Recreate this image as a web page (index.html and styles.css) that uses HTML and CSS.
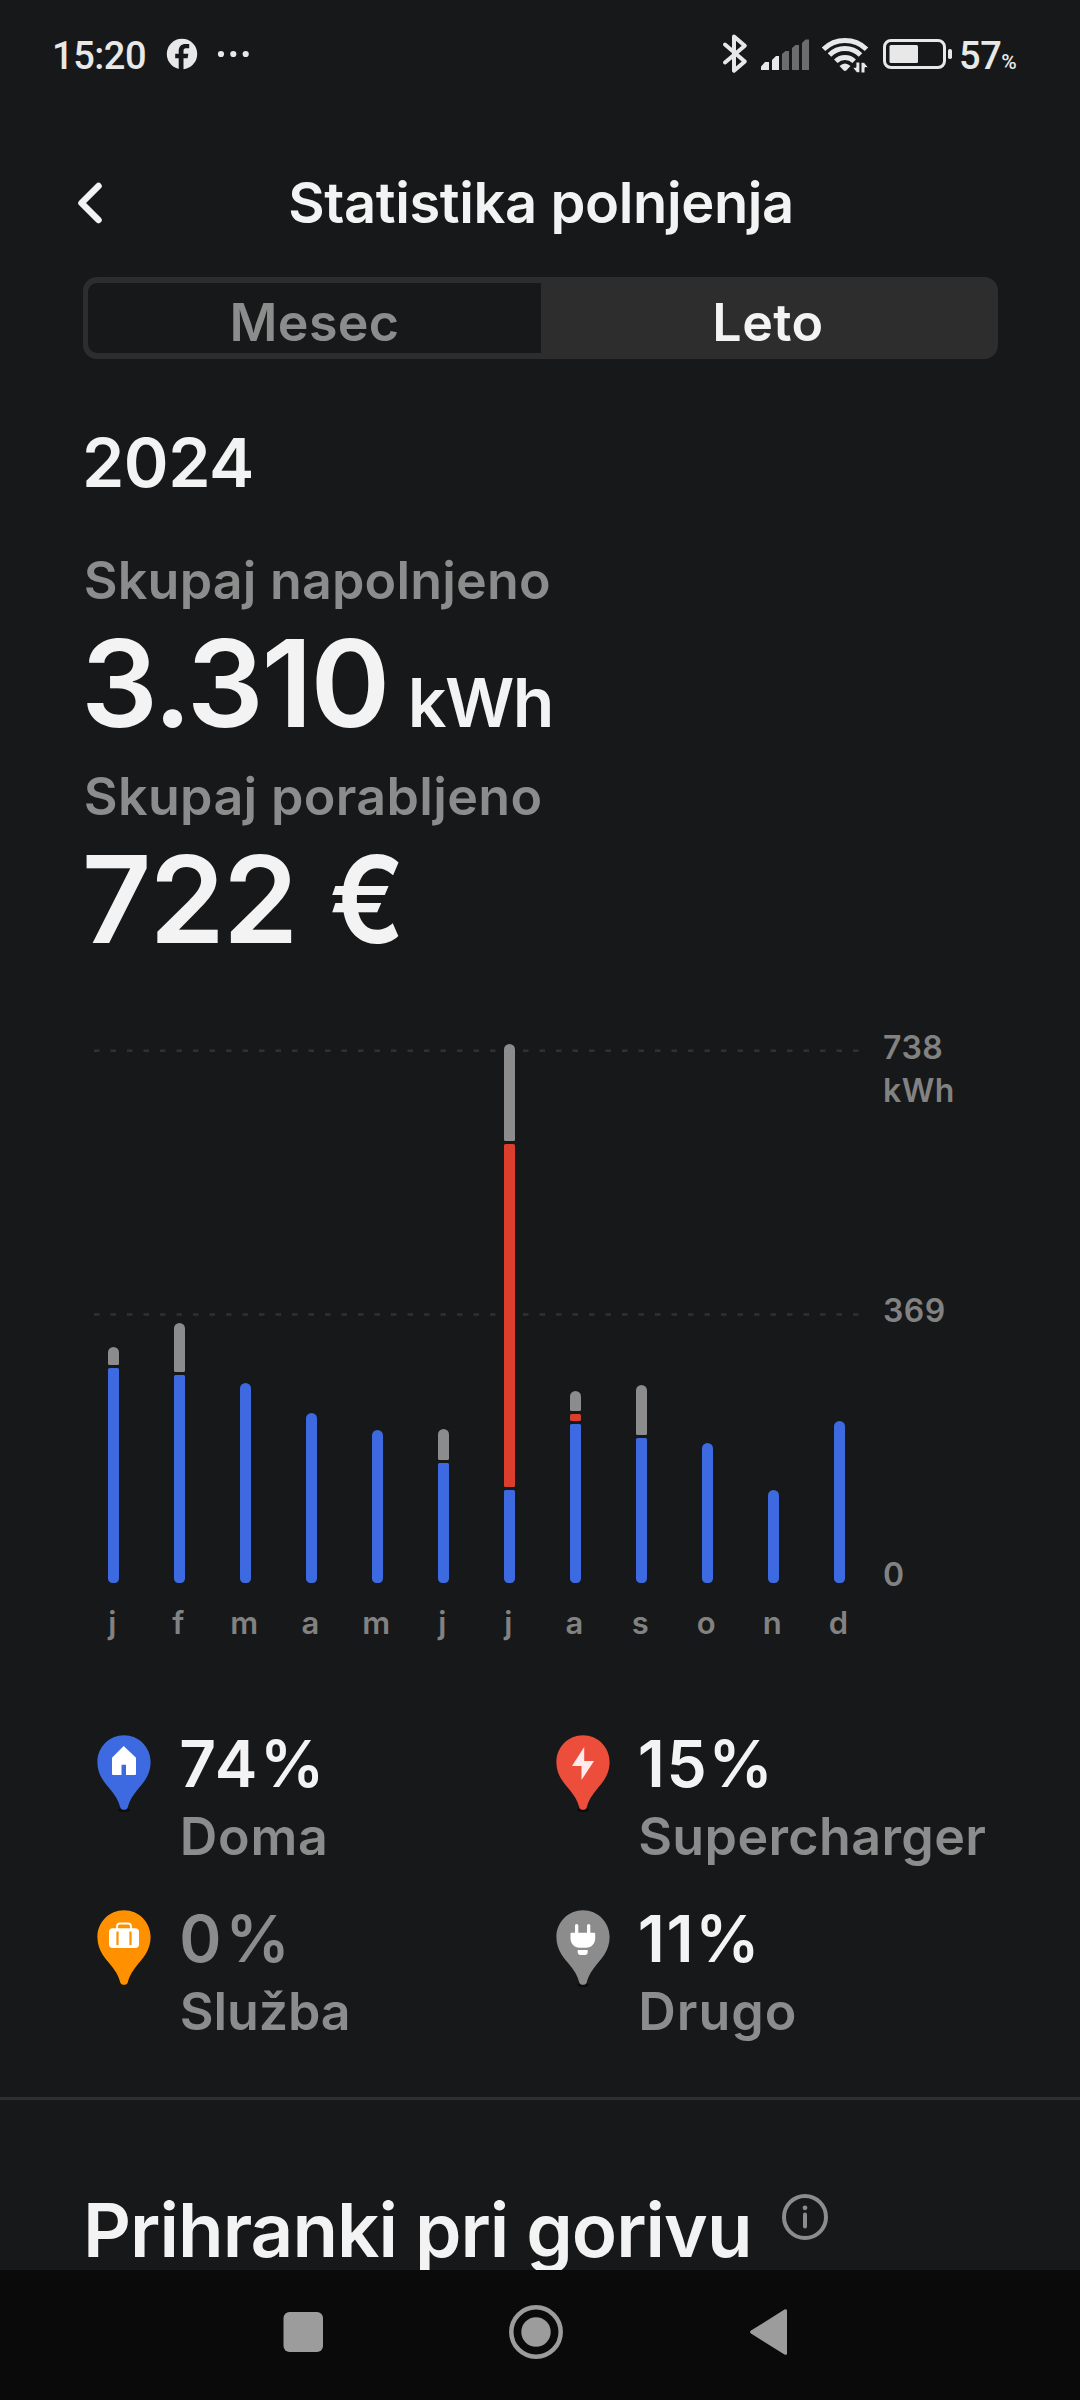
FILE: index.html
```html
<!DOCTYPE html>
<html lang="sl">
<head>
<meta charset="utf-8">
<title>Statistika polnjenja</title>
<link rel="stylesheet" href="styles.css">
</head>
<body>
<div class="screen">
  <div class="status">
    <span class="time">15:20</span>
    <svg class="notif" width="84" height="32" viewBox="166 38 84 32">
      <circle cx="182" cy="54" r="15.2" fill="#e8e8e8"/>
      <path fill="#171819" d="M178.7 70V58.3h-3.5v-4.5h3.5V51c0-4.8 2.8-7 6.8-7h3.7v4.3H186c-2 0-2.5 1-2.5 2.7v2.8h4.9l-.8 4.5h-4.1V70z"/>
      <g fill="#e8e8e8"><circle cx="221" cy="54" r="3.1"/><circle cx="233.3" cy="54" r="3.1"/><circle cx="245.7" cy="54" r="3.1"/></g>
    </svg>
    <svg class="indicators" width="234" height="42" viewBox="720 33 234 42">
      <path fill="none" stroke="#e8e8e8" stroke-width="4" stroke-linecap="round" stroke-linejoin="round" d="M725 44.5l19.8 17L734 70.8V36.5l10.8 9.3L725 62.5"/>
      <g fill="#e8e8e8"><path d="M761 70v-3.5l4-4.5h4v8z"/><path d="M772 70V60l4-4h3v14z"/></g>
      <g fill="#6c6d6e"><path d="M782 70V54l3.5-3h3.5v19z"/><path d="M792 70V48l3.5-3h3.5v25z"/><path d="M802 70V43l3.5-3.5h3.5V70z"/></g>
      <g fill="none" stroke="#e8e8e8" stroke-width="5"><path d="M823.5 49.2a31 31 0 0 1 43 0"/><path d="M829.5 55a22 22 0 0 1 31 0"/><path d="M835.8 61.2a13.2 13.2 0 0 1 18.4 0"/></g>
      <path fill="#e8e8e8" d="M839.5 66q5.500-5 11 0l-4 4.200q-1.500 1.400-3 0z"/>
      <g fill="#e8e8e8" stroke="#171819" stroke-width="1"><path d="M859.9 62v10.800h-3L852.300 67.300h3.600V62z"/><path d="M861 73V62.200h3l4.600 5.500h-3.600V73z"/></g>
      <rect x="884.5" y="40.500" width="60" height="27" rx="6.500" fill="none" stroke="#e8e8e8" stroke-width="3"/>
      <rect x="889.5" y="45" width="28.500" height="18" rx="1.500" fill="#e8e8e8"/>
      <rect x="948" y="49" width="4" height="10" rx="1.800" fill="#e8e8e8"/>
    </svg>
    <span class="battery">57<small>%</small></span>
  </div>

  <header class="header">
    <svg class="back" width="30" height="46" viewBox="75 179.500 30 46"><path fill="none" stroke="#f3f3f3" stroke-width="6.500" stroke-linecap="round" stroke-linejoin="round" d="M98.500 185.500L81.500 202.500l17 17"/></svg>
    <h1>Statistika polnjenja</h1>
  </header>

  <div class="tabs"><div class="tab">Mesec</div><div class="tab tab-on">Leto</div></div>

  <main>
    <div class="year">2024</div>
    <div class="label first">Skupaj napolnjeno</div>
    <div class="value energy">3.310<span class="unit">kWh</span></div>
    <div class="label second">Skupaj porabljeno</div>
    <div class="value cost">722 <span class="euro">€</span></div>

    <div class="chart">
      <div class="plot-col">
        <div class="plot">
          <svg class="grid" width="770" height="280" viewBox="0 0 770 280"><path stroke="#303132" stroke-width="2.500" stroke-dasharray="5.500 11" d="M0 5.700H766M0 269.400H766"/></svg>
          <div class="bar"><i class="other" style="height:18px"></i><i class="home" style="height:215.500px"></i></div>
          <div class="bar"><i class="other" style="height:49.400px"></i><i class="home" style="height:208.200px"></i></div>
          <div class="bar"><i class="home" style="height:200.400px"></i></div>
          <div class="bar"><i class="home" style="height:170.200px"></i></div>
          <div class="bar"><i class="home" style="height:153.900px"></i></div>
          <div class="bar"><i class="other" style="height:31px"></i><i class="home" style="height:120px"></i></div>
          <div class="bar"><i class="other" style="height:96.300px"></i><i class="super" style="height:343.200px"></i><i class="home" style="height:93.500px"></i></div>
          <div class="bar"><i class="other" style="height:20px"></i><i class="super" style="height:6.500px"></i><i class="home" style="height:159.600px"></i></div>
          <div class="bar"><i class="other" style="height:49.400px"></i><i class="home" style="height:145.700px"></i></div>
          <div class="bar"><i class="home" style="height:140px"></i></div>
          <div class="bar"><i class="home" style="height:93.500px"></i></div>
          <div class="bar"><i class="home" style="height:162.100px"></i></div>
        </div>
        <div class="months"><span>j</span><span>f</span><span>m</span><span>a</span><span>m</span><span>j</span><span>j</span><span>a</span><span>s</span><span>o</span><span>n</span><span>d</span></div>
      </div>
      <div class="axis"><div>738<br>kWh</div><div class="mid">369</div><div class="zero">0</div></div>
    </div>

    <div class="legend">
      <div class="item">
        <svg class="pin" width="54" height="78" viewBox="0 0 54 78"><ellipse cx="27" cy="75" rx="6" ry="2" fill="#0c0c0d"/><path fill="#3e6ae1" d="M27 .3C12.300.3.4 12.200.4 27 .4 41 9 49 14.500 56c5 6.500 7 10 8.800 16.500.7 3.100 6.700 3.100 7.400 0C32.500 66 34.500 62.500 39.500 56 45 49 53.600 41 53.600 27 53.600 12.200 41.700.3 27 .3z"/><path fill="#fff" d="M26.700 11L39 22.700V39q0 1-1 1h-9V29.700h-4.500V40H16q-1 0-1-1V22.700z"/></svg>
        <div><div class="pct p1">74%</div><div class="name n1">Doma</div></div>
      </div>
      <div class="item">
        <svg class="pin" width="54" height="78" viewBox="0 0 54 78"><ellipse cx="27" cy="75" rx="6" ry="2" fill="#0c0c0d"/><path fill="#ed4e3b" d="M27 .3C12.300.3.4 12.200.4 27 .4 41 9 49 14.500 56c5 6.500 7 10 8.800 16.500.7 3.100 6.700 3.100 7.400 0C32.500 66 34.500 62.500 39.500 56 45 49 53.600 41 53.600 27 53.600 12.200 41.700.3 27 .3z"/><path fill="#ffecea" d="M28.200 12L16 31h9.500v14L38 26h-9.800z"/></svg>
        <div><div class="pct p2">15%</div><div class="name n2">Supercharger</div></div>
      </div>
      <div class="item">
        <svg class="pin" width="54" height="78" viewBox="0 0 54 78"><path fill="#ff9100" d="M27 .3C12.300.3.4 12.200.4 27 .4 41 9 49 14.500 56c5 6.500 7 10 8.800 16.500.7 3.100 6.700 3.100 7.400 0C32.500 66 34.500 62.500 39.500 56 45 49 53.600 41 53.600 27 53.600 12.200 41.700.3 27 .3z"/><rect x="12" y="18.300" width="30" height="19.700" rx="3.800" fill="#fff"/><path fill="none" stroke="#fff" stroke-width="1.800" d="M20 19v-2.500q0-3 3-3h8q3 0 3 3V19"/><path stroke="#ff9100" stroke-width="2.200" d="M20.500 21.500v13.500M33.500 21.500v13.500"/></svg>
        <div><div class="pct p3">0%</div><div class="name n3">Služba</div></div>
      </div>
      <div class="item">
        <svg class="pin" width="54" height="78" viewBox="0 0 54 78"><ellipse cx="27" cy="75" rx="6" ry="2" fill="#0c0c0d"/><path fill="#8b8c8b" d="M27 .3C12.300.3.4 12.200.4 27 .4 41 9 49 14.500 56c5 6.500 7 10 8.800 16.500.7 3.100 6.700 3.100 7.400 0C32.500 66 34.500 62.500 39.500 56 45 49 53.600 41 53.600 27 53.600 12.200 41.700.3 27 .3z"/><g fill="#fff"><rect x="19" y="14" width="3.300" height="11" rx="1.600"/><rect x="31" y="14" width="3.300" height="11" rx="1.600"/><path d="M15.500 22.700h22.700q1 0 1 1V28c0 6-4 9.700-9 9.700h-6.700c-5 0-9-3.700-9-9.700v-4.300q0-1 1-1z"/><path d="M21.700 40h10v2q0 3-3 3h-4q-3 0-3-3z"/></g></svg>
        <div><div class="pct p4">11%</div><div class="name n4">Drugo</div></div>
      </div>
    </div>
  </main>

  <section class="savings">
    <h2>Prihranki pri gorivu</h2>
    <svg class="info" width="48" height="48" viewBox="0 0 48 48"><circle cx="24" cy="24" r="21" fill="none" stroke="#8b8c8b" stroke-width="4"/><circle cx="24" cy="14.800" r="2.400" fill="#8b8c8b"/><path stroke="#8b8c8b" stroke-width="4" stroke-linecap="round" d="M24 21.500v12"/></svg>
  </section>

  <nav class="navbar">
    <svg width="1080" height="130" viewBox="0 2270 1080 130"><g fill="#9c9c9c"><rect x="283.500" y="2312" width="39.500" height="40" rx="6"/><circle cx="536" cy="2332" r="14.700"/><path d="M751 2330.600L784.500 2309.600q2.500-1.300 2.500 1.200v42.400q0 2.500-2.500 1.200L751 2333.600q-2-1.500 0-3z"/></g><circle cx="536" cy="2332" r="24.700" fill="none" stroke="#9c9c9c" stroke-width="4.500"/></svg>
  </nav>
</div>
</body>
</html>
```
FILE: styles.css
```css
* { box-sizing: border-box; }
body { margin: 0; background: #171819; }
svg { display: block; flex: none; }
.screen {
  width: 1080px; height: 2400px; overflow: hidden;
  display: flex; flex-direction: column;
  background: #171819; color: #f3f3f3;
  font-family: Inter, "Liberation Sans", sans-serif; font-weight: 600;
}
.status {
  flex: none; height: 108px; padding-left: 52px;
  display: flex; align-items: center;
  font-family: Roboto, sans-serif; font-weight: 500; color: #e8e8e8;
}
.time, .battery { font-size: 38px; line-height: 44px; letter-spacing: -0.45px; padding-top: 4.6px; white-space: nowrap; }
.time { width: 114px; }
.indicators { margin-left: 470px; }
.battery { margin-left: 5px; height: 48.6px; }
.battery small { font-size: 21px; line-height: 1; margin-left: 0; }
.header { flex: none; height: 149px; margin-top: 20px; padding-left: 75px; display: flex; align-items: center; }
h1 { margin: 1px 0 0 183.3px; font-size: 56px; line-height: 60px; font-weight: 600; letter-spacing: -0.38px; }
.tabs {
  flex: none; height: 82px; margin: 0 82.5px 0 83px; padding-left: 5px;
  display: flex; border-radius: 14px; background: #2d2d2d;
}
.tab {
  flex: none; width: 453px; height: 70px; margin-top: 6px; border-radius: 9px 0 0 9px; background: #171819;
  text-align: center; font-size: 52px; line-height: 79px; letter-spacing: 0.3px; color: #8b8c8b;
}
.tab-on { flex: 1; padding-right: 2.5px; background: none; color: #f3f3f3; letter-spacing: 0.4px; }
main { flex: none; padding-left: 83px; }
.year { margin: 62.500px 0 0 -1px; font-size: 68px; line-height: 80px; letter-spacing: -0.500px; }
.label { margin-left: 0.8px; font-size: 52px; line-height: 60px; color: #8b8c8b; white-space: nowrap; }
.first { margin-top: 49.500px; letter-spacing: 0.190px; }
.second { margin-top: 23px; letter-spacing: 0.340px; }
.value { margin: 12px 0 0 -2px; height: 121px; font-size: 121px; line-height: 120px; letter-spacing: -2.160px; white-space: nowrap; }
.cost { margin-left: -1.200px; letter-spacing: -1.950px; }
.euro { display: inline-block; transform: scaleX(0.92); transform-origin: 97% 50%; margin-left: -2px; }
.unit { margin-left: 19.500px; font-size: 68px; line-height: 68px; letter-spacing: -1.500px; }
.chart { display: flex; margin-top: 65.600px; height: 616.200px; margin-left: -3px; color: #828282; font-size: 32px; }
.plot-col { width: 803px; padding-top: 19px; }
.plot { position: relative; width: 792px; height: 538.800px; display: flex; }
.grid { position: absolute; left: 14px; top: 0; }
.bar { position: relative; width: 66px; height: 100%; display: flex; flex-direction: column; justify-content: flex-end; align-items: center; gap: 3px; }
.bar i { width: 11px; flex: none; border-radius: 1.500px; }
.bar i:first-child { border-top-left-radius: 5.500px; border-top-right-radius: 5.500px; }
.bar i:last-child { border-bottom-left-radius: 4.500px; border-bottom-right-radius: 4.500px; }
.home { background: #3e6ae1; }
.super { background: #db3e2d; }
.other { background: #8b8c8b; }
.months { display: flex; margin: 19.200px 0 0 -0.700px; line-height: 40px; font-size: 31px; }
.months span { width: 66px; text-align: center; }
.axis { line-height: 43.400px; letter-spacing: 0.500px; }
.mid { margin-top: 176.800px; }
.zero { margin-top: 220px; }
.legend { display: grid; grid-template-columns: 458.500px 458.500px; row-gap: 37.200px; margin: 87.200px 0 0 14.200px; }
.item { display: flex; }
.pin { margin: 6px 28px 0 0; }
.pct { font-size: 64px; line-height: 70px; }
.name { margin-top: 7.800px; margin-left: 0.500px; font-size: 52px; line-height: 60px; color: #8b8c8b; }
.p1 { letter-spacing: 2.500px; }
.p2, .p4 { letter-spacing: 1.700px; }
.p3 { letter-spacing: 4px; color: #8b8c8b; }
.n1 { letter-spacing: 0.800px; }
.n2 { letter-spacing: 0.360px; }
.n3 { letter-spacing: -0.100px; }
.n4 { letter-spacing: 1px; }
.savings { flex: none; height: 173px; margin-top: 55.700px; padding: 84.700px 0 0 83px; border-top: 3px solid #2e2f31; display: flex; overflow: hidden; }
h2 { margin: 0; font-size: 74.500px; line-height: 90px; font-weight: 600; letter-spacing: -0.950px; white-space: nowrap; }
.info { margin: 7.700px 0 0 29.800px; }
.navbar { flex: none; height: 130px; background: #0a0a0a; }
```
